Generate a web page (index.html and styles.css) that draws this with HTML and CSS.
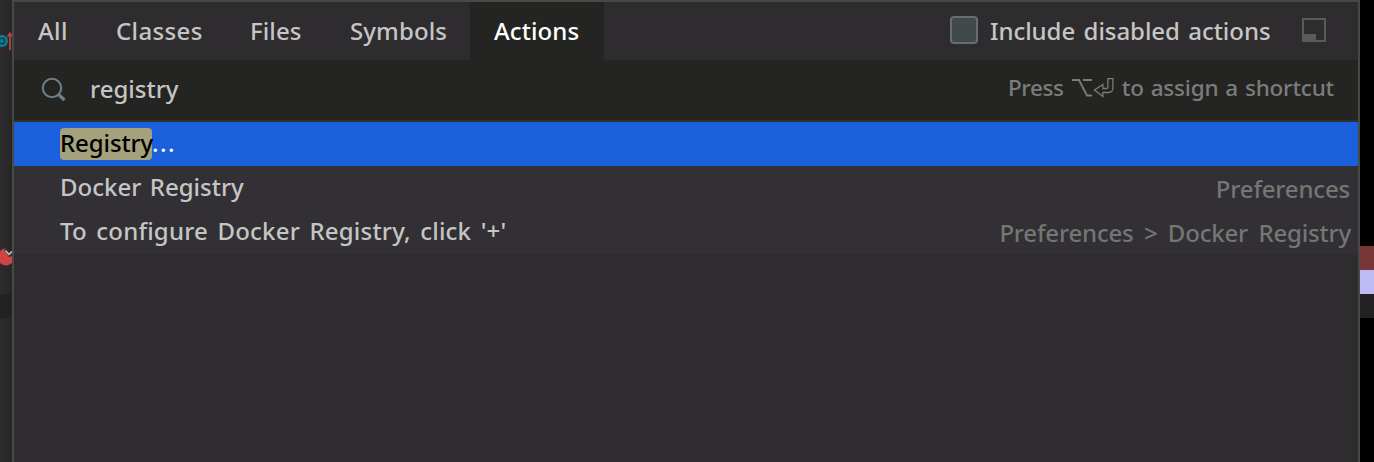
FILE: index.html
```html
<!DOCTYPE html>
<html lang="en">
<head>
<meta charset="utf-8">
<title>Search Everywhere</title>
<link rel="stylesheet" href="styles.css">
</head>
<body>
<div class="screen">
  <aside class="gutter">
    <svg class="gutter-icons" width="12" height="462" viewBox="0 0 12 462">
      <rect y="294" width="12" height="24" fill="#232124"/>
      <circle cx="2" cy="41" r="6" fill="#087f9c"/>
      <circle cx="2" cy="41" r="2.7" fill="none" stroke="#1d3843" stroke-width="1.4"/>
      <path d="M10 50V34" stroke="#bd4341" stroke-width="1.8"/>
      <path d="M6.5 36.5L10 32L13.5 36.5Z" fill="#bd4341"/>
      <circle cx="6" cy="257" r="8.5" fill="#cf4546"/>
      <path d="M4 250L7 248H12V256L9 257Z" fill="#29272a"/>
      <path d="M5.500 250.500L9 254.500L12 251.500" fill="none" stroke="#b5b7ba" stroke-width="1.800"/>
    </svg>
  </aside>
  <main class="popup">
    <header class="header">
      <nav class="tabs">
        <span class="tab tab-all">All</span>
        <span class="tab tab-classes">Classes</span>
        <span class="tab tab-files">Files</span>
        <span class="tab tab-symbols">Symbols</span>
        <span class="tab tab-actions">Actions</span>
      </nav>
      <label class="option"><span class="checkbox"></span><span class="option-label">Include disabled actions</span></label>
      <svg class="pin" width="24" height="24" viewBox="0 0 24 24"><rect x="1" y="1" width="22" height="22" fill="none" stroke="#5a5c59" stroke-width="2"/><path d="M0 16H14V24H0Z" fill="#5a5c59"/></svg>
    </header>
    <div class="search">
      <svg class="lens" width="26" height="26" viewBox="0 0 26 26" fill="none" stroke="#6f7f86"><circle cx="11" cy="11" r="9.200" stroke-width="2"/><path d="M17.500 17.500L23.500 23" stroke-width="3.200"/></svg>
      <span class="query">registry</span>
      <span class="hint"><span class="press">Press</span><svg class="keys" width="42" height="22" viewBox="0 0 42 22" fill="none" stroke="#7b7d7a"><path d="M0 3H7L15 18.500H20M11 3H20" stroke-width="1.800"/><path d="M36 1.500H41V11Q41 15.500 36.500 15.500H31V19.500L22.500 13L31 7.500V11.500H34.500Q36 11.500 36 10Z" stroke-width="1.300"/></svg><span class="assign">to assign a shortcut</span></span>
    </div>
    <div class="results">
      <div class="row selected"><span class="name first"><mark class="match">Registry</mark><span class="dots">...</span></span></div>
      <div class="row"><span class="name second">Docker Registry</span><span class="place prefs">Preferences</span></div>
      <div class="row"><span class="name third">To configure Docker Registry, click '+'</span><span class="place path">Preferences &gt; Docker Registry</span></div>
    </div>
  </main>
  <aside class="edge"><div class="edge-red"></div><div class="edge-lilac"></div><div class="edge-dark"></div></aside>
</div>
</body>
</html>
```
FILE: styles.css
```css
* { box-sizing: border-box; }
body { margin: 0; background: #000; }
.screen {
  display: flex;
  width: 1374px;
  height: 462px;
  overflow: hidden;
  font: 500 24px/44px "Noto Sans", "Open Sans", sans-serif;
  color: #c5c6c4;
  white-space: nowrap;
}
.gutter { width: 12px; background: linear-gradient(90deg, #2d2b2e, #272528); }
.gutter-icons { display: block; }
.popup {
  width: 1348px;
  background: #2e2c2f;
  border: solid #474946;
  border-width: 2px 2px 0;
}
.header { display: flex; align-items: center; height: 58px; }
.tabs { display: flex; height: 58px; line-height: 58px; }
.tab { padding-left: 24px; }
.tab-all { width: 78px; letter-spacing: 0.4px; }
.tab-classes { width: 134px; letter-spacing: 0.35px; }
.tab-files { width: 100px; letter-spacing: 0.1px; }
.tab-symbols { width: 144px; letter-spacing: 0.1px; }
.tab-actions { width: 134px; background: #242422; color: #fff; letter-spacing: 0.1px; }
.option { display: flex; align-items: center; gap: 12px; width: 338px; margin-left: 346px; }
.option-label { letter-spacing: -0.05px; word-spacing: 2.2px; }
.checkbox { width: 28px; height: 28px; margin-top: -2px; border: 2px solid #696c69; border-radius: 4px; background: #414a4b; }
.pin { margin-left: 14px; margin-top: -2px; }
.search {
  display: flex;
  align-items: center;
  height: 62px;
  padding: 0 24px 2px 27px;
  background: #242422;
  border-bottom: 2px solid #30302f;
}
.lens { margin-top: 2px; }
.query { margin-left: 23px; }
.hint { display: flex; align-items: center; width: 326px; margin-left: auto; margin-top: -2px; font-size: 22.500px; color: #7b7d7a; }
.press { width: 64px; letter-spacing: -0.4px; }
.keys { margin-right: 8px; }
.assign { letter-spacing: -0.2px; word-spacing: 1.3px; }
.results { background: #323034; }
.row { display: flex; justify-content: space-between; height: 44px; padding: 0 8px 0 46px; }
.selected { background: #1a60dc; color: #fff; }
.name { line-height: 41px; }
.match { display: inline-block; width: 92px; height: 32px; margin-top: 6px; vertical-align: top; line-height: 30px; border-radius: 4px; background: #a3a27c; color: #000; letter-spacing: -0.1px; }
.dots { letter-spacing: 1.5px; }
.second { word-spacing: 2.2px; }
.third { letter-spacing: 0.2px; word-spacing: 3px; }
.place { line-height: 45px; color: #747673; letter-spacing: -0.18px; }
.path { margin-right: -1px; word-spacing: 4.3px; }
.edge { width: 14px; padding-top: 246px; }
.edge-red { height: 24px; background: #793636; }
.edge-lilac { height: 24px; background: #bebaf4; }
.edge-dark { height: 24px; background: #232124; }
```
